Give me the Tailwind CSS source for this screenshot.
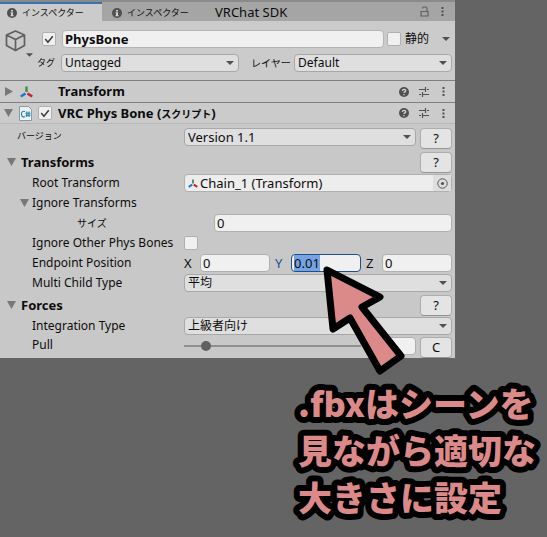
<!DOCTYPE html>
<html lang="ja">
<head>
  <meta charset="UTF-8" />
  <meta name="viewport" content="width=device-width, initial-scale=1.0" />
  <title>Inspector - PhysBone</title>
  <script src="https://cdn.jsdelivr.net/npm/@tailwindcss/browser@4"></script>
</head>
<body class="min-h-screen bg-[#646464] text-[13px] leading-4 text-[#0c0c0c] font-['Noto_Sans','Noto_Sans_CJK_JP',sans-serif]">
  <!-- shared icons -->
  <svg class="hidden">
    <symbol id="info" viewBox="0 0 10 10">
      <circle cx="5" cy="5" r="5" fill="#505050" />
      <path d="M4 2h2v1.5H4zM3.5 4.3H6v3h.7v1H3.4v-1H4V5.200h-.5z" fill="#d0d0d0" />
    </symbol>
    <symbol id="arrow" viewBox="0 0 8 4"><path d="M0 0h8L4 4z" fill="#505050" /></symbol>
    <symbol id="fold" viewBox="0 0 9 8"><path d="M0 0h9L4.500 8z" fill="#787878" /></symbol>
    <symbol id="check" viewBox="0 0 13 13"><path d="M3 6.500l2.500 3L10 4" fill="none" stroke="#404040" stroke-width="1.500" /></symbol>
    <symbol id="axis" viewBox="0 0 13 12">
      <path d="M6.500 0.500v5.500" stroke="#3f8f3f" stroke-width="2.400" />
      <path d="M5.500 7.500L0.800 10.500" stroke="#1e74d6" stroke-width="2.600" />
      <path d="M7.500 7.500l4.700 3" stroke="#c81e2c" stroke-width="2.600" />
    </symbol>
    <symbol id="help" viewBox="0 0 10 10">
      <circle cx="5" cy="5" r="5" fill="#505050" />
      <path d="M3.400 3.900c0-2.100 3.300-2.100 3.300-.2 0 1.200-1.700 1.200-1.700 2.400M5 7v1.300" fill="none" stroke="#d0d0d0" stroke-width="1.300" />
    </symbol>
    <symbol id="preset" viewBox="0 0 10 10">
      <path d="M0 2.500h6M8 2.500h2M6.500 0v5M0 7.500h2M4 7.500h6M3.500 5v5" fill="none" stroke="#505050" stroke-width="1.200" />
    </symbol>
    <symbol id="dots" viewBox="0 0 3 11"><path d="M.5 1h2v2h-2zM.5 4.500h2v2h-2zM.5 8h2v2h-2z" fill="#505050" /></symbol>
  </svg>

  <main class="relative w-[83.2%] bg-[#c8c8c8] pb-px">
    <nav class="flex h-[21px] items-stretch border-t-2 border-[#8a8a8a] bg-[#a5a5a5]">
      <button class="flex w-[102px] items-center gap-[5px] border-t-2 border-[#3a72b0] bg-[#cbcbcb] pl-[7px]">
        <svg class="size-[10px]"><use href="#info" /></svg><span class="text-[9px]">インスペクター</span>
      </button>
      <button class="flex w-[102px] items-center gap-[5px] pt-[2px] pl-[10px]">
        <svg class="size-[10px]"><use href="#info" /></svg><span class="text-[9px]">インスペクター</span>
      </button>
      <button class="px-[11px]">VRChat SDK</button>
      <button class="ml-auto mr-3" aria-label="ロック">
        <svg class="h-[11px] w-[9px]" viewBox="0 0 9 11"><path d="M1 5.500h7v4.500H1zM7 5.500V2.500Q7 1 5.500 1H4Q2.500 1 2.500 2.500" fill="none" stroke="#606060" stroke-width="1.200" /></svg>
      </button>
      <button class="mr-[11px]" aria-label="メニュー"><svg class="h-[11px] w-[3px]"><use href="#dots" /></svg></button>
    </nav>

    <header class="flex h-[59px] gap-1 bg-[#cbcbcb] pt-[9px] pr-[3px] pl-[5px]">
      <button class="flex w-7 shrink-0 flex-col items-start" aria-label="アイコン">
        <svg class="h-[23px] w-[21px]" viewBox="0 0 21 23"><path d="M10.500 1l9 4v10.500l-9 5-9-5V5zM1.500 5l9 4.500 9-4.500M10.500 9.500V20" fill="none" stroke="#606060" stroke-width="1.700" stroke-linejoin="round" /></svg>
        <svg class="h-1 w-[7px] self-end"><use href="#arrow" /></svg>
      </button>
      <div class="flex min-w-0 flex-1 flex-col gap-[6px]">
        <div class="flex h-[18px] items-center">
          <span class="relative ml-[5px] size-[14px] shrink-0">
            <input type="checkbox" checked aria-label="有効" class="block size-[14px] appearance-none rounded-xs border border-[#b0b0b0] bg-[#f0f0f0]" />
            <svg class="pointer-events-none absolute inset-0 size-[14px]"><use href="#check" /></svg>
          </span>
          <input type="text" value="PhysBone" aria-label="名前" class="ml-[6px] h-[18px] min-w-0 flex-1 rounded-sm border border-[#b4b4b4] bg-[#f0f0f0] px-[2px] pb-px font-bold" />
          <input id="static" type="checkbox" class="ml-[3px] size-[14px] shrink-0 appearance-none rounded-xs border border-[#b0b0b0] bg-[#f0f0f0]" />
          <label for="static" class="ml-1 text-[12px]">静的</label>
          <button class="mr-[2px] ml-[13px]" aria-label="静的メニュー"><svg class="h-1 w-2"><use href="#arrow" /></svg></button>
        </div>
        <div class="flex h-[18px] items-center">
          <label for="tag" class="w-6 shrink-0 text-[9px]">タグ</label>
          <span class="relative h-[18px] min-w-0 flex-1">
            <select id="tag" class="block h-[18px] w-full appearance-none rounded-sm border border-[#a8a8a8] bg-[#dfdfdf] pl-[3px] text-[12px] leading-4"><option>Untagged</option></select>
            <svg class="pointer-events-none absolute top-[7px] right-[5px] h-1 w-2"><use href="#arrow" /></svg>
          </span>
          <label for="layer" class="w-[55px] shrink-0 pl-3 text-[10px]">レイヤー</label>
          <span class="relative h-[18px] w-[158px]">
            <select id="layer" class="block h-[18px] w-full appearance-none rounded-sm border border-[#a8a8a8] bg-[#dfdfdf] pl-[3px] text-[12px] leading-4"><option>Default</option></select>
            <svg class="pointer-events-none absolute top-[7px] right-[5px] h-1 w-2"><use href="#arrow" /></svg>
          </span>
        </div>
      </div>
    </header>

    <section class="flex h-[22px] items-center border-t border-[#7f7f7f] bg-[#cbcbcb] pr-[10px] pl-[5px]">
      <svg class="h-[9px] w-2" viewBox="0 0 8 9"><path d="M0 0l8 4.500L0 9z" fill="#787878" /></svg>
      <svg class="ml-[7px] h-3 w-[13px]"><use href="#axis" /></svg>
      <h2 class="ml-[25px] flex-1 pb-px font-bold">Transform</h2>
      <div class="flex items-center gap-[10px]">
        <button aria-label="ヘルプ"><svg class="size-[10px]"><use href="#help" /></svg></button>
        <button aria-label="プリセット"><svg class="size-[10px]"><use href="#preset" /></svg></button>
        <button class="ml-[3px]" aria-label="メニュー"><svg class="h-[11px] w-[3px]"><use href="#dots" /></svg></button>
      </div>
    </section>

    <section class="flex h-[22px] items-center border-t border-b border-t-[#7f7f7f] border-b-[#b8b8b8] bg-[#cbcbcb] pr-[10px] pl-1">
      <svg class="h-2 w-[9px]"><use href="#fold" /></svg>
      <svg class="ml-[6px] h-[15px] w-[13px]" viewBox="0 0 13 15">
        <path d="M.5.500h9l3 3v11H.5z" fill="#eef2f4" stroke="#8c9aa2" />
        <path d="M6 5.500Q2.500 4.500 2.500 8T6 10.800M7.800 5.500v5.500M10 5.500v5.500M6.500 7.200h5M6.500 9.300h5" fill="none" stroke="#1d83ad" stroke-width="1.100" />
      </svg>
      <span class="relative ml-[6px] size-[14px]">
        <input type="checkbox" checked aria-label="VRC Phys Bone" class="block size-[14px] appearance-none rounded-xs border border-[#b0b0b0] bg-[#f0f0f0]" />
        <svg class="pointer-events-none absolute inset-0 size-[14px]"><use href="#check" /></svg>
      </span>
      <h2 class="ml-[6px] flex-1 font-bold">VRC Phys Bone (<span class="text-[10px]">スクリプト</span>)</h2>
      <div class="flex items-center gap-[10px]">
        <button aria-label="ヘルプ"><svg class="size-[10px]"><use href="#help" /></svg></button>
        <button aria-label="プリセット"><svg class="size-[10px]"><use href="#preset" /></svg></button>
        <button class="ml-[3px]" aria-label="メニュー"><svg class="h-[11px] w-[3px]"><use href="#dots" /></svg></button>
      </div>
    </section>

    <form class="flex flex-col gap-[2px] pt-1 pr-[3px] text-[12px] leading-4">
      <div class="flex h-[22px] items-start">
        <label for="version" class="w-[184px] shrink-0 pl-[17px] text-[9px]">バージョン</label>
        <span class="relative min-w-0 flex-1">
          <select id="version" class="block h-[18px] w-full appearance-none rounded-sm border border-[#a8a8a8] bg-[#dfdfdf] pl-[3px] text-[13px] leading-4"><option>Version 1.1</option></select>
          <svg class="pointer-events-none absolute top-[7px] right-[5px] h-1 w-2"><use href="#arrow" /></svg>
        </span>
        <button type="button" class="ml-1 h-[21px] w-8 rounded-sm border border-[#adadad] border-b-[#959595] bg-[#e4e4e4] pb-px text-[13px]">?</button>
      </div>

      <div class="flex h-5 items-center">
        <svg class="ml-[7px] h-2 w-[9px]"><use href="#fold" /></svg>
        <h3 class="ml-[5px] flex-1 pb-px text-[13px] font-bold">Transforms</h3>
        <button type="button" class="h-[21px] w-8 rounded-sm border border-[#adadad] border-b-[#959595] bg-[#e4e4e4] pb-px text-[13px]">?</button>
      </div>

      <div class="flex h-[18px] items-center">
        <label for="root" class="w-[184px] shrink-0 pl-8">Root Transform</label>
        <span class="flex h-[18px] min-w-0 flex-1 items-center rounded-sm border border-[#b0b0b0] bg-[#ededed] pl-[3px]">
          <svg class="h-[9px] w-[10px] shrink-0"><use href="#axis" /></svg>
          <input id="root" type="text" value="Chain_1 (Transform)" class="ml-[2px] h-4 min-w-0 flex-1 text-[13px]" />
          <button type="button" class="flex h-4 w-[18px] items-center justify-center bg-[#dedede]" aria-label="選択">
            <svg class="size-[11px]" viewBox="0 0 11 11"><circle cx="5.500" cy="5.500" r="4.700" fill="none" stroke="#555" /><circle cx="5.500" cy="5.500" r="1.600" fill="#555" /></svg>
          </button>
        </span>
      </div>

      <div class="flex h-[18px] items-center">
        <svg class="ml-5 h-2 w-[9px]"><use href="#fold" /></svg>
        <h4 class="ml-[3px]">Ignore Transforms</h4>
      </div>

      <div class="flex h-[18px] items-center">
        <label for="size" class="w-[214px] shrink-0 pl-[77px] text-[10px]">サイズ</label>
        <input id="size" type="text" value="0" class="h-[18px] min-w-0 flex-1 rounded-sm border border-[#b0b0b0] bg-[#f0f0f0] px-[2px] text-[13px]" />
      </div>

      <div class="flex h-[18px] items-center">
        <label for="ignore" class="w-[184px] shrink-0 pl-8 whitespace-nowrap">Ignore Other Phys Bones</label>
        <input id="ignore" type="checkbox" class="size-[14px] appearance-none rounded-xs border border-[#b0b0b0] bg-[#f0f0f0]" />
      </div>

      <div class="flex h-[18px] items-center">
        <span class="w-[184px] shrink-0 pl-8">Endpoint Position</span>
        <div class="grid min-w-0 flex-1 grid-cols-3 gap-[5px] text-[13px]">
          <div class="flex items-center">
            <label for="x" class="w-4 shrink-0">X</label>
            <input id="x" type="text" value="0" class="h-[18px] w-full min-w-0 rounded-sm border border-[#b0b0b0] bg-[#f0f0f0] px-[2px]" />
          </div>
          <div class="flex items-center">
            <label for="y" class="w-4 shrink-0 text-[#1d4f91]">Y</label>
            <input id="y" type="text" value="0.01" class="h-[18px] w-full min-w-0 rounded-sm border border-[#1d5087] bg-[#f0f0f0] px-[2px] caret-transparent outline-none selection:bg-[#75a3e3] selection:text-[#0c0c0c]" />
          </div>
          <div class="flex items-center">
            <label for="z" class="w-4 shrink-0">Z</label>
            <input id="z" type="text" value="0" class="h-[18px] w-full min-w-0 rounded-sm border border-[#b0b0b0] bg-[#f0f0f0] px-[2px]" />
          </div>
        </div>
      </div>

      <div class="flex h-[18px] items-center">
        <label for="child" class="w-[184px] shrink-0 pl-8">Multi Child Type</label>
        <span class="relative min-w-0 flex-1">
          <select id="child" class="block h-[18px] w-full appearance-none rounded-sm border border-[#a8a8a8] bg-[#dfdfdf] pl-[3px] leading-4"><option>平均</option></select>
          <svg class="pointer-events-none absolute top-[7px] right-[5px] h-1 w-2"><use href="#arrow" /></svg>
        </span>
      </div>

      <div class="mt-px flex h-5 items-center">
        <svg class="ml-[7px] h-2 w-[9px]"><use href="#fold" /></svg>
        <h3 class="ml-[5px] flex-1 pb-px text-[13px] font-bold">Forces</h3>
        <button type="button" class="h-[21px] w-8 rounded-sm border border-[#adadad] border-b-[#959595] bg-[#e4e4e4] pb-px text-[13px]">?</button>
      </div>

      <div class="flex h-[18px] items-center">
        <label for="integration" class="w-[184px] shrink-0 pl-8">Integration Type</label>
        <span class="relative min-w-0 flex-1">
          <select id="integration" class="block h-[18px] w-full appearance-none rounded-sm border border-[#a8a8a8] bg-[#dfdfdf] pl-[3px] leading-4"><option>上級者向け</option></select>
          <svg class="pointer-events-none absolute top-[7px] right-[5px] h-1 w-2"><use href="#arrow" /></svg>
        </span>
      </div>

      <div class="flex h-5 items-start">
        <label for="pull" class="w-[184px] shrink-0 pl-8">Pull</label>
        <span class="flex h-[18px] min-w-0 flex-1 items-center">
          <input id="pull" type="range" min="0" max="100" value="10" class="h-[2px] w-full min-w-0 appearance-none bg-[#8f8f8f] [&::-webkit-slider-thumb]:size-[10px] [&::-webkit-slider-thumb]:appearance-none [&::-webkit-slider-thumb]:rounded-full [&::-webkit-slider-thumb]:bg-[#606060]" />
        </span>
        <input type="text" aria-label="Pull" class="ml-[5px] h-[18px] w-[50px] rounded-sm border border-[#b0b0b0] bg-[#f0f0f0] px-[2px]" />
        <button type="button" class="ml-1 h-[21px] w-8 rounded-sm border border-[#adadad] border-b-[#959595] bg-[#e4e4e4] pb-px text-[13px]">C</button>
      </div>
    </form>

    <!-- callout arrow, points at the Y field -->
    <svg class="pointer-events-none absolute top-[262px] left-[318px] h-[116px] w-[90px]" viewBox="318 262 90 116">
      <path d="M327 270L380 297L362 307L401 356L380 371L350 318L333 329Z" fill="#dc8989" stroke="#000" stroke-width="7" stroke-linejoin="round" />
    </svg>
  </main>

  <!-- outlined caption, svg text so that the outline gets round corners -->
  <svg class="mt-5 ml-[290px] h-[150px] w-[252px] text-[34px] font-black font-['Noto_Sans_CJK_JP',sans-serif] [paint-order:stroke]" fill="#dc8989" stroke="#000" stroke-width="12" stroke-linejoin="round">
    <text x="8" y="39">.fbxはシーンを</text>
    <text x="8" y="86">見ながら適切な</text>
    <text x="8" y="133">大きさに設定</text>
  </svg>

  <script>
    const y = document.getElementById('y');
    y.focus();
    y.select();
  </script>
</body>
</html>
